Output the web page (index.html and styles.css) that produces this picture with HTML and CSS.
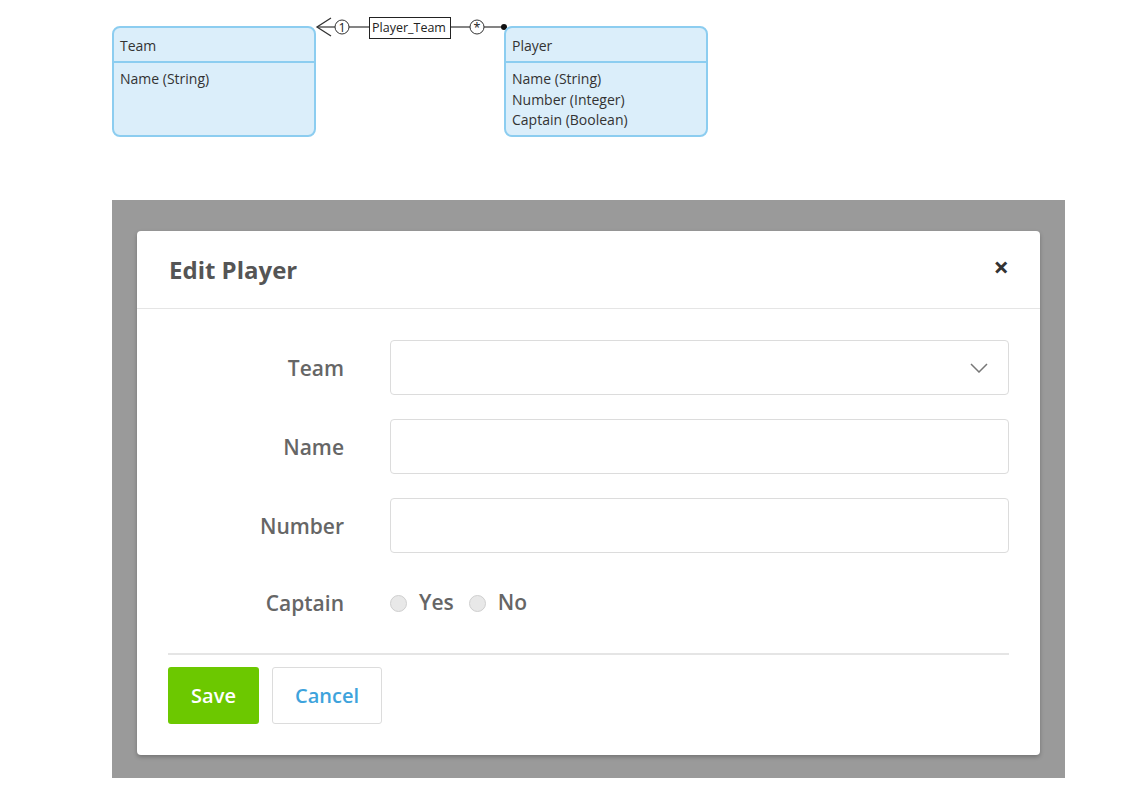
FILE: index.html
```html
<!DOCTYPE html>
<html>
<head>
<meta charset="utf-8">
<link rel="stylesheet" href="styles.css">
</head>
<body>
<div class="diagram">
  <svg class="links" width="1134" height="60" viewBox="0 0 1134 60">
    <polyline points="331,18 317,27 331,36" fill="none" stroke="#333" stroke-width="1.3"/>
    <line x1="317" y1="27" x2="335" y2="27" stroke="#333" stroke-width="1.2"/>
    <circle cx="342" cy="27" r="7" fill="#fff" stroke="#333" stroke-width="1"/>
    <text x="342" y="31.5" text-anchor="middle" class="svgtxt">1</text>
    <line x1="349" y1="27" x2="369" y2="27" stroke="#333" stroke-width="1.2"/>
    <rect x="369.5" y="17.5" width="81" height="21" fill="#fff" stroke="#222" stroke-width="1"/>
    <text x="409" y="32" text-anchor="middle" class="svgtxt">Player_Team</text>
    <line x1="451" y1="27" x2="470" y2="27" stroke="#333" stroke-width="1.2"/>
    <circle cx="477" cy="27" r="7" fill="#fff" stroke="#333" stroke-width="1"/>
    <text x="477" y="32" text-anchor="middle" class="svgtxt">*</text>
    <line x1="484" y1="27" x2="504" y2="27" stroke="#333" stroke-width="1.2"/>
    <circle cx="504" cy="27" r="3" fill="#111"/>
  </svg>
  <div class="entity entity-team">
    <div class="entity-head">Team</div>
    <div class="entity-body"><div>Name (String)</div></div>
  </div>
  <div class="entity entity-player">
    <div class="entity-head">Player</div>
    <div class="entity-body">
      <div>Name (String)</div>
      <div>Number (Integer)</div>
      <div>Captain (Boolean)</div>
    </div>
  </div>
</div>

<div class="overlay">
  <div class="modal">
    <div class="modal-header">
      <h2 class="modal-title">Edit Player</h2>
      <span class="close">&times;</span>
    </div>
    <div class="modal-body">
      <div class="form-row">
        <label class="form-label">Team</label>
        <div class="select">
          <svg class="chev" width="18" height="10" viewBox="0 0 18 10"><polyline points="1,1 9,9 17,1" fill="none" stroke="#777" stroke-width="1.5"/></svg>
        </div>
      </div>
      <div class="form-row">
        <label class="form-label">Name</label>
        <div class="input"></div>
      </div>
      <div class="form-row">
        <label class="form-label">Number</label>
        <div class="input"></div>
      </div>
      <div class="form-row radio-row">
        <label class="form-label">Captain</label>
        <div class="radios">
          <span class="radio"></span><span class="radio-text">Yes</span>
          <span class="radio"></span><span class="radio-text">No</span>
        </div>
      </div>
    </div>
    <div class="modal-footer">
      <button class="btn btn-save">Save</button>
      <button class="btn btn-cancel">Cancel</button>
    </div>
  </div>
</div>
</body>
</html>
```

FILE: styles.css
```css
html, body {
  margin: 0;
  padding: 0;
  background: #fff;
}
body {
  font-family: "Open Sans", "Noto Sans", sans-serif;
  width: 1134px;
  height: 791px;
  overflow: hidden;
}

/* Diagram canvas */
.diagram {
  position: relative;
  height: 200px;
}
.links {
  position: absolute;
  left: 0;
  top: 0;
}
.svgtxt {
  font-family: "Open Sans", sans-serif;
  font-size: 12.5px;
  fill: #222;
}
.entity {
  position: absolute;
  top: 26px;
  width: 200px;
  height: 107px;
  background: #dbeefa;
  border: 2px solid #8ccdf0;
  border-radius: 8px;
  font-size: 14px;
  color: #333;
  box-sizing: content-box;
}
.entity-team { left: 112px; }
.entity-player { left: 504px; }
.entity-head {
  height: 33px;
  line-height: 35px;
  padding-left: 6px;
  border-bottom: 2px solid #8ccdf0;
}
.entity-body {
  padding: 6px 6px 0;
  line-height: 20.5px;
}

/* Modal overlay */
.overlay {
  margin-left: 112px;
  width: 953px;
  height: 578px;
  box-sizing: border-box;
  padding: 31px 25px 23px 25px;
  background: #9a9a9a;
}
.modal {
  background: #fff;
  border-radius: 4px;
  height: 524px;
  box-shadow: 0 2px 4px rgba(0,0,0,0.25);
  display: flex;
  flex-direction: column;
}
.modal-header {
  height: 77px;
  border-bottom: 1px solid #e5e5e5;
  display: flex;
  align-items: center;
  justify-content: space-between;
  padding: 0 31px 0 32px;
}
.modal-title {
  margin: 0;
  font-size: 24px;
  font-weight: 700;
  color: #555;
  letter-spacing: 0;
}
.close {
  font-size: 27px;
  font-weight: 700;
  color: #333;
  line-height: 1;
  margin-top: -6px;
}
.modal-body {
  padding: 31px 31px 0 0;
  display: flex;
  flex-direction: column;
  gap: 24px;
}
.form-row {
  display: grid;
  grid-template-columns: 207px 1fr;
  column-gap: 46px;
  align-items: center;
  height: 55px;
}
.radio-row {
  height: 52px;
}
.form-label {
  text-align: right;
  font-size: 21px;
  font-weight: 600;
  color: #666;
}
.input, .select {
  height: 55px;
  box-sizing: border-box;
  border: 1px solid #dcdcdc;
  border-radius: 4px;
  background: #fff;
}
.select {
  display: flex;
  align-items: center;
  justify-content: flex-end;
  padding-right: 20px;
}
.radios {
  display: flex;
  align-items: center;
  font-size: 21px;
  color: #666;
}
.radio {
  width: 17px;
  height: 17px;
  border-radius: 50%;
  background: #e8e8e8;
  border: 1px solid #cfcfcf;
  box-sizing: border-box;
  margin-right: 12px;
}
.radio-text {
  margin-right: 15px;
  font-weight: 600;
  margin-top: -2px;
}
.modal-footer {
  margin: 24px 31px 0 31px;
  border-top: 2px solid #e5e5e5;
  padding-top: 12px;
  display: flex;
  gap: 13px;
}
.btn {
  height: 57px;
  border-radius: 3px;
  font-family: "Open Sans", sans-serif;
  font-size: 20px;
  font-weight: 600;
  cursor: pointer;
}
.btn-save {
  width: 91px;
  background: #6cc800;
  color: #fff;
  border: none;
}
.btn-cancel {
  width: 110px;
  background: #fff;
  color: #3ea3dc;
  border: 1px solid #dcdcdc;
}
```
